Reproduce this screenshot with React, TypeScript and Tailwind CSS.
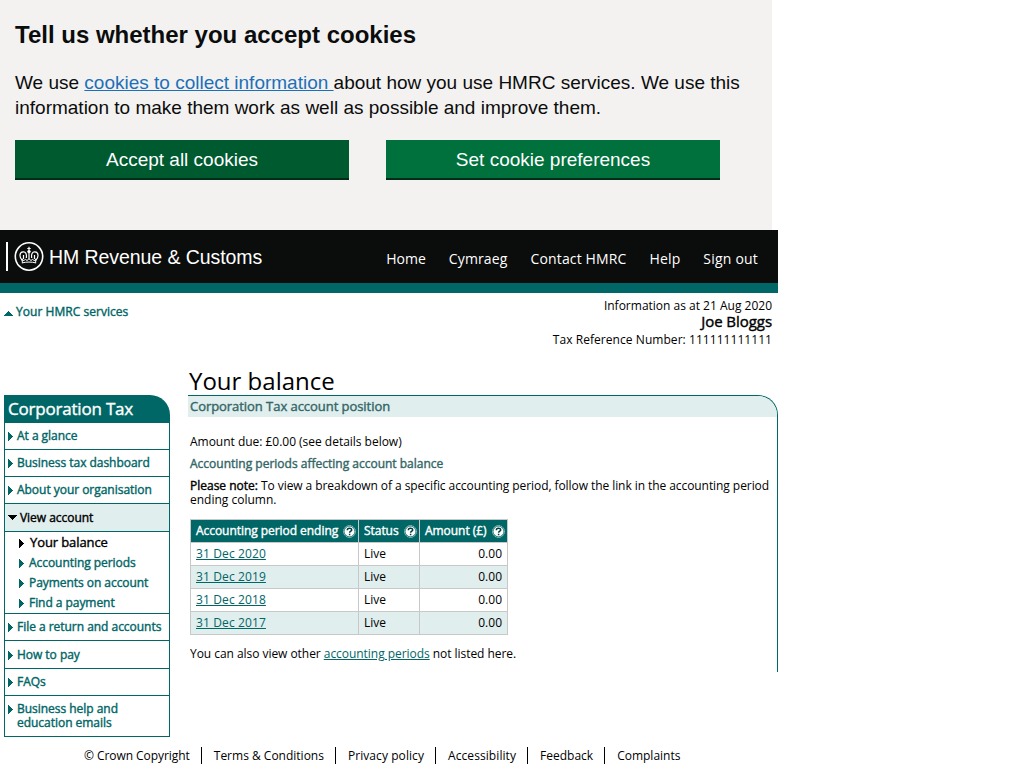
import React from 'react';

const bold = '[-webkit-text-stroke:0.4px_currentColor]';

function Arrow({ dir, className = '' }: { dir: 'up' | 'right' | 'down'; className?: string }) {
  if (dir === 'right') {
    return (
      <svg width="5" height="9" viewBox="0 0 5 9" fill="currentColor" shapeRendering="crispEdges" className={`shrink-0 ${className}`}>
        <path d="M0 0h1v1h1v1h1v1h1v1h1v1h-1v1h-1v1h-1v1h-1v1h-1z" />
      </svg>
    );
  }
  return (
    <svg width="9" height="5" viewBox="0 0 9 5" fill="currentColor" shapeRendering="crispEdges" className={`shrink-0 ${className}`}>
      <path d={dir === 'up' ? 'M4 0h1v1h1v1h1v1h1v1h1v1h-9v-1h1v-1h1v-1h1v-1h1z' : 'M0 0h9v1h-1v1h-1v1h-1v1h-1v1h-1v-1h-1v-1h-1v-1h-1v-1h-1z'} />
    </svg>
  );
}

function HelpIcon() {
  return (
    <svg width="13" height="13" viewBox="0 0 13 13" className="shrink-0">
      <circle cx="6.5" cy="6.5" r="5.9" fill="none" stroke="#fff" strokeWidth="1" strokeDasharray="1 1" />
      <circle cx="6.5" cy="6.5" r="5" fill="#fff" />
      <path d="M4.300 5.300C4.300 2.600 8.700 2.600 8.700 4.900c0 1.400-2.100 1.300-2.100 2.900M6.600 8.700v1.500" fill="none" stroke="#003c3c" strokeWidth="1.500" />
    </svg>
  );
}

function Crest() {
  return (
    <svg width="30" height="30" viewBox="0 0 30 30" fill="none" stroke="#fff" className="mt-px ml-[6px] shrink-0">
      <circle cx="15" cy="14.500" r="13.700" strokeWidth="1.600" />
      <path d="M8.300 18.500C5.200 15.500 5 10.300 9 9.900c3-.3 3.800 2.600 3.300 6.100M21.700 18.500C24.800 15.500 25 10.300 21 9.900c-3-.3-3.800 2.600-3.300 6.100" strokeWidth="1.200" />
      <path d="M15 4.800v4M13.300 6.500h3.400M15 11v6M9.500 13v4M20.500 13v4" strokeWidth="1.200" />
      <circle cx="15" cy="9.600" r="1.700" fill="#fff" stroke="none" />
      <path d="M8 16.500l1.500 2.500 1.800-1.800 1.700 1.300 2-1.700 2 1.700 1.700-1.300 1.800 1.800 1.500-2.500M8.500 20.800c4-1 9-1 13 0" strokeWidth="1" />
      <path d="M8.300 18v3.300" strokeWidth="1" />
      <path d="M21.700 18v3.300" strokeWidth="1" />
    </svg>
  );
}

function NavItem({ label, height, pt = 'pt-[5px]' }: { label: React.ReactNode; height: string; pt?: string }) {
  return (
    <li className={`flex border-b border-[#006666] pl-[3px] ${height} ${pt}`}>
      <Arrow dir="right" className="mt-[4px]" />
      <a className={`ml-[4px] leading-[14px] pt-[1px] ${bold}`}>{label}</a>
    </li>
  );
}

const rows = ['31 Dec 2020', '31 Dec 2019', '31 Dec 2018', '31 Dec 2017'];
const subItems = ['Accounting periods', 'Payments on account', 'Find a payment'];
const footer = [
  ['© Crown Copyright', 'tracking-[-0.06px]'],
  ['Terms & Conditions', ''],
  ['Privacy policy', 'tracking-[0.07px]'],
  ['Accessibility', 'tracking-[0.08px]'],
  ['Feedback', ''],
  ['Complaints', ''],
];

export default function App() {
  return (
    <div className="h-[769px] w-[1024px] overflow-hidden bg-white font-['Open_Sans',sans-serif] text-[12px] leading-[14px] text-black">
      <section className="h-[230px] w-[772px] bg-[#f3f2f1] px-[15px] pt-[20px] font-['Liberation_Sans',sans-serif] text-[#0b0c0c]">
        <h2 className="text-[24px] leading-[30px] font-bold">Tell us whether you accept cookies</h2>
        <p className="mt-[20px] text-[19px] leading-[25px] whitespace-nowrap">
          We use <a className="text-[#1d70b8] underline">cookies to collect information </a>about how you use HMRC services. We use this
          <br />
          information to make them work as well as possible and improve them.
        </p>
        <div className="mt-[20px] flex gap-[37px] text-[19px] text-white">
          <button className="h-[40px] w-[334px] border-b-2 border-[#002d18] bg-[#005a30] pt-[2px]">Accept all cookies</button>
          <button className="h-[40px] w-[334px] border-b-2 border-[#002d18] bg-[#00703c] pt-[2px]">Set cookie preferences</button>
        </div>
      </section>

      <header className="flex h-[63px] w-[778px] border-b-[10px] border-[#006666] bg-[#0b0c0c] text-white">
        <div className="mt-[12px] flex h-[29px] items-center pl-[6px]">
          <span className="h-[29px] w-[2px] bg-white" />
          <Crest />
          <span className="ml-[5px] whitespace-nowrap font-['Liberation_Sans',sans-serif] text-[19.5px] leading-[28px] tracking-[-0.07px]">HM Revenue &amp; Customs</span>
        </div>
        <nav className="ml-auto flex gap-[23px] pt-[19px] pr-[20px] text-[14px] leading-[20px]">
          <a>Home</a>
          <a className="tracking-[0.14px]">Cymraeg</a>
          <a className="tracking-[0.14px]">Contact HMRC</a>
          <a className="tracking-[0.14px]">Help</a>
          <a className="tracking-[0.2px]">Sign out</a>
        </nav>
      </header>

      <div className="flex h-[74px] w-[772px] justify-between pt-[5px]">
        <a className="flex pt-[7px] pl-[4px] text-[#006666]">
          <Arrow dir="up" className="mt-[6px]" />
          <span className={`ml-[3px] tracking-[0.04px] ${bold}`}>Your HMRC services</span>
        </a>
        <div className="text-right">
          <p className="leading-[16px]">Information as at 21 Aug 2020</p>
          <p className={`text-[15px] leading-[14px] tracking-[-0.05px] ${bold}`}>Joe Bloggs</p>
          <p className="mt-[4px] leading-[16px] tracking-[0.055px]">Tax Reference Number: 111111111111</p>
        </div>
      </div>

      <div className="flex h-[370px]">
        <aside className="mt-[28px] ml-[4px] h-[342px] w-[166px] text-[#006666]">
          <h2 className={`h-[27px] rounded-tr-[20px] bg-[#006666] pl-[4px] text-[17px] leading-[27px] tracking-[-0.2px] text-white ${bold}`}>Corporation Tax</h2>
          <ul className="border-x border-t border-[#006666] tracking-[-0.03px]">
            <NavItem label="At a glance" height="h-[27px]" />
            <NavItem label="Business tax dashboard" height="h-[27px]" />
            <NavItem label="About your organisation" height="h-[27px]" />
            <li className="h-[28px] border-b border-[#006666] bg-[#e0eeee] pt-[7px]">
              <div className="flex pl-[3px] text-black">
                <Arrow dir="down" className="mt-[4px]" />
                <span className={`ml-[3px] ${bold}`}>View account</span>
              </div>
            </li>
            <li className="h-[82px] border-b border-[#006666] pl-[14px]">
              <div className="flex h-[21px] text-[13px] leading-[20px] tracking-[-0.1px] text-black">
                <Arrow dir="right" className="mt-[7px]" />
                <span className={`ml-[6px] ${bold}`}>Your balance</span>
              </div>
              {subItems.map((s) => (
                <div key={s} className="flex h-[20px] items-center tracking-[-0.05px]">
                  <Arrow dir="right" />
                  <a className={`ml-[5px] ${bold}`}>{s}</a>
                </div>
              ))}
            </li>
            <NavItem label="File a return and accounts" height="h-[27px]" />
            <NavItem label="How to pay" height="h-[28px]" pt="pt-[6px]" />
            <NavItem label="FAQs" height="h-[27px]" />
            <NavItem label={<>Business help and<br />education emails</>} height="h-[41px]" />
          </ul>
        </aside>

        <main className="ml-[18px] w-[590px]">
          <h1 className="h-[28px] pl-px text-[24px] leading-[27px]">Your balance</h1>
          <div className="h-[277px] overflow-hidden rounded-tr-[20px] border-t border-r border-[#006666]">
            <h2 className={`h-[21px] bg-[#e0eeee] pl-[2px] text-[13px] leading-[20px] tracking-[-0.05px] text-[#336666] ${bold}`}>Corporation Tax account position</h2>
            <div className="pl-[2px]">
              <p className="mt-[18px] tracking-[-0.02px]">Amount due: £0.00 (see details below)</p>
              <h3 className={`mt-[8px] text-[#336666] ${bold}`}>Accounting periods affecting account balance</h3>
              <p className="mt-[8px] whitespace-nowrap">
                <span className={bold}>Please note:</span>
                <span className="tracking-[-0.068px]"> To view a breakdown of a specific accounting period, follow the link in the accounting period</span>
                <br />
                ending column.
              </p>
              <table className="mt-[12px] w-[317px] table-fixed border-collapse border border-[#c8c8c8]">
                <colgroup>
                  <col className="w-[168px]" />
                  <col className="w-[61px]" />
                  <col className="w-[88px]" />
                </colgroup>
                <thead>
                  <tr className="h-[23px] bg-[#006666] text-white">
                    {['Accounting period ending', 'Status', 'Amount (£)'].map((h) => (
                      <th key={h} className="border border-[#c8c8c8] pr-[2px] pl-[5px] font-normal">
                        <div className={`flex items-center justify-between whitespace-nowrap tracking-[-0.05px] ${bold}`}>
                          {h}
                          <HelpIcon />
                        </div>
                      </th>
                    ))}
                  </tr>
                </thead>
                <tbody>
                  {rows.map((r, i) => (
                    <tr key={r} className={i % 2 ? 'h-[23px] bg-[#e0eeee]' : 'h-[23px]'}>
                      <td className="border border-[#c8c8c8] pl-[5px]"><a className="tracking-[0.12px] text-[#006666] underline">{r}</a></td>
                      <td className="border border-[#c8c8c8] pl-[5px]">Live</td>
                      <td className="border border-[#c8c8c8] pr-[5px] text-right">0.00</td>
                    </tr>
                  ))}
                </tbody>
              </table>
              <p className="mt-[12px] tracking-[-0.045px]">
                You can also view other <a className="text-[#006666] underline">accounting periods</a> not listed here.
              </p>
            </div>
          </div>
        </main>
      </div>

      <footer className="flex pt-[10px] pl-[84px] leading-[17px]">
        {footer.map(([label, tracking], i) => (
          <a key={label} className={`${tracking} ${i < 5 ? 'mr-[12px] border-r border-black pr-[11px]' : ''}`}>{label}</a>
        ))}
      </footer>
    </div>
  );
}
